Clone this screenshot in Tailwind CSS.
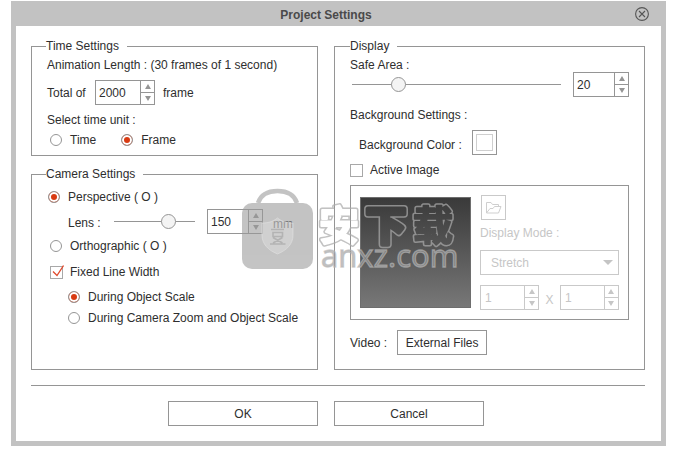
<!DOCTYPE html>
<html lang="en">
<head>
<meta charset="utf-8">
<title>Project Settings</title>
<script src="https://cdn.jsdelivr.net/npm/@tailwindcss/browser@4"></script>
</head>
<body class="bg-white font-['Liberation_Sans',Arial,sans-serif] text-[12px] leading-4 text-[#2e2e2e]">
<main class="relative mt-px mr-[34px] ml-[11px] border-[5px] border-t-0 border-[#c2c2c2] bg-white">
  <header class="-mx-[5px] flex h-[25px] items-center bg-[#c2c2c2] pr-[17px] pl-1.5">
    <h1 class="flex-1 pt-0.5 text-center font-bold text-[#4a4a4a]">Project Settings</h1>
    <button type="button" aria-label="Close" class="size-[14px]">
      <svg viewBox="0 0 14 14" class="size-[14px]" fill="none" stroke="#555" stroke-width="1.1"><circle cx="7" cy="7" r="6.4"/><path d="M4 4l6 6M10 4l-6 6"/></svg>
    </button>
  </header>

  <form class="pt-3 pr-4 pb-[15px] pl-[15px]">
    <div class="grid grid-cols-[12fr_13fr] gap-4">
      <div class="flex flex-col gap-[10px]">
        <fieldset class="border border-[#959595] pb-[7px]">
          <legend class="ml-[14px] pr-2">Time Settings</legend>
          <div class="flex flex-col pl-[15px]">
            <p class="mt-[3px]">Animation Length : (30 frames of 1 second)</p>
            <div class="mt-[7px] flex items-center gap-2">
              <label for="total" class="w-10 whitespace-nowrap">Total of</label>
              <div class="flex h-[25px] w-[60px] border border-[#959595]">
                <input id="total" type="text" inputmode="numeric" value="2000" class="min-w-0 flex-1 pl-[3px] outline-none">
                <div class="flex w-[14px] flex-col divide-y divide-[#959595] border-l border-[#959595] text-[#959595]">
                  <button type="button" aria-label="Increase frames" class="flex flex-1 items-center justify-center"><svg viewBox="0 0 6 5" class="h-[5px] w-[6px]"><path d="M0 5L3 0l3 5z" fill="currentColor"/></svg></button>
                  <button type="button" aria-label="Decrease frames" class="flex flex-1 items-center justify-center"><svg viewBox="0 0 6 5" class="h-[5px] w-[6px]"><path d="M0 0h6L3 5z" fill="currentColor"/></svg></button>
                </div>
              </div>
              <span>frame</span>
            </div>
            <p class="mt-[7px]">Select time unit :</p>
            <div class="mt-1 flex gap-[25px] pl-[3px]">
              <label class="flex items-center gap-2"><input type="radio" name="unit" class="size-3 appearance-none rounded-full border border-[#959595] bg-white checked:bg-[#d93a12] checked:shadow-[inset_0_0_0_2px_white]">Time</label>
              <label class="flex items-center gap-2"><input type="radio" name="unit" checked class="size-3 appearance-none rounded-full border border-[#959595] bg-white checked:bg-[#d93a12] checked:shadow-[inset_0_0_0_2px_white]">Frame</label>
            </div>
          </div>
        </fieldset>

        <fieldset class="flex-1 border border-[#959595] pb-[43px]">
          <legend class="ml-[14px] pr-2">Camera Settings</legend>
          <div class="flex flex-col pl-4">
            <label class="mt-[7px] flex items-center gap-2"><input type="radio" name="projection" checked class="size-3 appearance-none rounded-full border border-[#959595] bg-white checked:bg-[#d93a12] checked:shadow-[inset_0_0_0_2px_white]">Perspective ( O )</label>
            <div class="mt-1 flex h-[25px] items-center pl-5">
              <label for="lens" class="w-[46px] pt-0.5">Lens :</label>
              <input id="lens" type="range" min="1" max="210" value="150" class="h-[15px] w-[81px] appearance-none bg-transparent [&::-webkit-slider-runnable-track]:h-px [&::-webkit-slider-runnable-track]:bg-[#959595] [&::-webkit-slider-thumb]:-mt-[7px] [&::-webkit-slider-thumb]:size-[15px] [&::-webkit-slider-thumb]:appearance-none [&::-webkit-slider-thumb]:rounded-full [&::-webkit-slider-thumb]:border [&::-webkit-slider-thumb]:border-[#959595] [&::-webkit-slider-thumb]:bg-[#f4f4f4]">
              <div class="ml-3 flex h-[25px] w-14 border border-[#959595]">
                <input type="text" inputmode="numeric" aria-label="Lens in mm" value="150" class="min-w-0 flex-1 pl-[3px] outline-none">
                <div class="flex w-[14px] flex-col divide-y divide-[#959595] border-l border-[#959595] text-[#959595]">
                  <button type="button" aria-label="Increase lens" class="flex flex-1 items-center justify-center"><svg viewBox="0 0 6 5" class="h-[5px] w-[6px]"><path d="M0 5L3 0l3 5z" fill="currentColor"/></svg></button>
                  <button type="button" aria-label="Decrease lens" class="flex flex-1 items-center justify-center"><svg viewBox="0 0 6 5" class="h-[5px] w-[6px]"><path d="M0 0h6L3 5z" fill="currentColor"/></svg></button>
                </div>
              </div>
              <span class="ml-[10px] pt-1">mm</span>
            </div>
            <label class="mt-1 flex items-center gap-2 pl-0.5"><input type="radio" name="projection" class="size-3 appearance-none rounded-full border border-[#959595] bg-white checked:bg-[#d93a12] checked:shadow-[inset_0_0_0_2px_white]">Orthographic ( O )</label>
            <label class="relative mt-[10px] flex items-center gap-[7px] pl-0.5">
              <input type="checkbox" checked class="size-[13px] appearance-none border border-[#a8a8a8] bg-white">
              <svg viewBox="0 0 14 14" class="pointer-events-none absolute top-0 left-0.5 size-[14px]" fill="none" stroke="#e0492c" stroke-width="1.3"><path d="M3 7.5l4 4L13.5 1.500"/></svg>
              Fixed Line Width
            </label>
            <label class="mt-[9px] flex items-center gap-2 pl-5"><input type="radio" name="linewidth" checked class="size-3 appearance-none rounded-full border border-[#959595] bg-white checked:bg-[#d93a12] checked:shadow-[inset_0_0_0_2px_white]">During Object Scale</label>
            <label class="mt-[5px] flex items-center gap-2 pl-5 whitespace-nowrap"><input type="radio" name="linewidth" class="size-3 appearance-none rounded-full border border-[#959595] bg-white checked:bg-[#d93a12] checked:shadow-[inset_0_0_0_2px_white]">During Camera Zoom and Object Scale</label>
          </div>
        </fieldset>
      </div>

      <fieldset class="border border-[#959595] pb-[14px]">
        <legend class="ml-[15px] pr-2">Display</legend>
        <div class="flex flex-col px-[15px]">
          <label for="safe" class="mt-[3px]">Safe Area :</label>
          <div class="-mt-px flex h-[25px] items-center gap-3 pl-0.5">
            <input id="safe" type="range" min="0" max="100" value="20" class="h-[15px] min-w-0 flex-1 appearance-none bg-transparent [&::-webkit-slider-runnable-track]:h-px [&::-webkit-slider-runnable-track]:bg-[#959595] [&::-webkit-slider-thumb]:-mt-[7px] [&::-webkit-slider-thumb]:size-[15px] [&::-webkit-slider-thumb]:appearance-none [&::-webkit-slider-thumb]:rounded-full [&::-webkit-slider-thumb]:border [&::-webkit-slider-thumb]:border-[#959595] [&::-webkit-slider-thumb]:bg-[#f4f4f4]">
            <div class="flex h-[25px] w-14 border border-[#959595]">
              <input type="text" inputmode="numeric" aria-label="Safe area value" value="20" class="min-w-0 flex-1 pl-[3px] outline-none">
              <div class="flex w-[14px] flex-col divide-y divide-[#959595] border-l border-[#959595] text-[#959595]">
                <button type="button" aria-label="Increase safe area" class="flex flex-1 items-center justify-center"><svg viewBox="0 0 6 5" class="h-[5px] w-[6px]"><path d="M0 5L3 0l3 5z" fill="currentColor"/></svg></button>
                <button type="button" aria-label="Decrease safe area" class="flex flex-1 items-center justify-center"><svg viewBox="0 0 6 5" class="h-[5px] w-[6px]"><path d="M0 0h6L3 5z" fill="currentColor"/></svg></button>
              </div>
            </div>
          </div>
          <p class="mt-[10px]">Background Settings :</p>
          <div class="mt-[7px] flex items-center gap-[10px] pl-[9px]">
            <label for="bgcolor" class="pt-1">Background Color :</label>
            <button id="bgcolor" type="button" aria-label="Background color" class="size-[25px] border border-[#959595] p-[3px]"><span class="block size-[17px] border border-[#cfcfcf] bg-white"></span></button>
          </div>
          <label class="mt-[7px] flex items-center gap-[7px]"><input type="checkbox" class="size-[13px] appearance-none border border-[#a8a8a8] bg-white">Active Image</label>

          <div class="mt-[7px] flex gap-[9px] border border-[#959595] p-[9px]">
            <div class="mt-0.5 size-[111px] shrink-0 border border-[#6e6e6e] bg-linear-to-b from-[#3a3a3a] to-[#787878]"></div>
            <div class="flex min-w-0 flex-1 flex-col text-[#c6c6c6]">
              <button type="button" disabled aria-label="Open image" class="ml-px flex size-[25px] items-center justify-center border border-[#c9c9c9]">
                <svg viewBox="0 0 17 13" class="h-[13px] w-[17px]" fill="none" stroke="#cfcfcf" stroke-width="1"><path d="M1.500 12V1.500h4.500l1.500 2h6v2M1.500 12l3.500-4.500h3l1.500-2h6.500L13.500 12z"/></svg>
              </button>
              <label for="mode" class="mt-[5px]">Display Mode :</label>
              <div class="relative mt-[9px]">
                <select id="mode" disabled class="h-[25px] w-full appearance-none border border-[#c9c9c9] bg-white pl-[10px] text-[#c6c6c6] opacity-100"><option>Stretch</option></select>
                <svg viewBox="0 0 10 5" class="pointer-events-none absolute top-[10px] right-[6px] h-[5px] w-[10px]"><path d="M0 0h10L5 5z" fill="#c4c4c4"/></svg>
              </div>
              <div class="mt-[10px] flex items-center justify-between">
                <div class="flex h-[25px] w-[59px] border border-[#c9c9c9]">
                  <input type="text" disabled aria-label="Columns" value="1" class="min-w-0 flex-1 pl-1">
                  <div class="flex w-[14px] flex-col divide-y divide-[#c9c9c9] border-l border-[#c9c9c9]">
                    <button type="button" disabled aria-label="Increase columns" class="flex flex-1 items-center justify-center"><svg viewBox="0 0 6 5" class="h-[5px] w-[6px]"><path d="M0 5L3 0l3 5z" fill="currentColor"/></svg></button>
                    <button type="button" disabled aria-label="Decrease columns" class="flex flex-1 items-center justify-center"><svg viewBox="0 0 6 5" class="h-[5px] w-[6px]"><path d="M0 0h6L3 5z" fill="currentColor"/></svg></button>
                  </div>
                </div>
                <span class="pt-1">X</span>
                <div class="flex h-[25px] w-[59px] border border-[#c9c9c9]">
                  <input type="text" disabled aria-label="Rows" value="1" class="min-w-0 flex-1 pl-1">
                  <div class="flex w-[14px] flex-col divide-y divide-[#c9c9c9] border-l border-[#c9c9c9]">
                    <button type="button" disabled aria-label="Increase rows" class="flex flex-1 items-center justify-center"><svg viewBox="0 0 6 5" class="h-[5px] w-[6px]"><path d="M0 5L3 0l3 5z" fill="currentColor"/></svg></button>
                    <button type="button" disabled aria-label="Decrease rows" class="flex flex-1 items-center justify-center"><svg viewBox="0 0 6 5" class="h-[5px] w-[6px]"><path d="M0 0h6L3 5z" fill="currentColor"/></svg></button>
                  </div>
                </div>
              </div>
            </div>
          </div>

          <div class="mt-[10px] flex items-center gap-[10px]">
            <label for="video">Video :</label>
            <button id="video" type="button" class="h-[25px] w-[90px] border border-[#959595]">External Files</button>
          </div>
        </div>
      </fieldset>
    </div>

    <hr class="mt-[15px] border-[#959595]">

    <div class="mt-[15px] grid grid-cols-[12fr_13fr] gap-4">
      <button type="submit" class="h-[25px] w-[150px] justify-self-end border border-[#959595]">OK</button>
      <button type="button" class="h-[25px] w-[150px] border border-[#959595]">Cancel</button>
    </div>
  </form>

  <!-- Site watermark -->
  <svg viewBox="240 186 230 100" class="pointer-events-none absolute top-[185px] left-[224px] h-[100px] w-[230px]" aria-label="安下载 anxz.com">
    <defs>
      <mask id="ring" maskUnits="userSpaceOnUse" x="240" y="186" width="230" height="86">
        <g font-family="Noto Sans CJK SC, sans-serif" font-size="40" font-weight="700" stroke-linejoin="round">
          <g fill="white" stroke="white"><text x="319" y="240" stroke-width="5">安</text><text x="366" y="240" stroke-width="8">下</text><text x="413" y="240" stroke-width="5">载</text></g>
          <g fill="black" stroke="black"><text x="319" y="240" stroke-width="2">安</text><text x="366" y="240" stroke-width="5">下</text><text x="413" y="240" stroke-width="2">载</text></g>
        </g>
      </mask>
    </defs>
    <g opacity=".58">
      <path d="M258 203C261 194 268 191 277.500 191S294 194 297 203" fill="none" stroke="#999" stroke-width="4.500"/>
      <rect x="242" y="203" width="71" height="66" rx="10" fill="#999"/>
    </g>
    <path d="M277.500 218c5 4 10 5 15.500 5v12c0 9-6 15-15.500 19-9.500-4-15.500-10-15.500-19v-12c5.500 0 10.500-1 15.500-5z" fill="#e8e8e8" fill-opacity=".35" stroke="#e2e2e2" stroke-opacity=".6"/>
    <path d="M271 229.500h13M273 232.500h9.500v4H273zM270 244h15.500M273 237.500l9.500 5.500M282.500 237.500l-9.500 5.500" fill="none" stroke="#b3b3b3" stroke-width="1.600"/>
    <rect x="314" y="194" width="148" height="56" fill="#aaa" fill-opacity=".72" mask="url(#ring)"/>
    <text x="321" y="267" font-family="Open Sans, sans-serif" font-size="31" font-weight="400" fill="#999" fill-opacity=".6" stroke="#b8b8b8" stroke-opacity=".65" stroke-width="1.300">anxz.com</text>
  </svg>
</main>
</body>
</html>
